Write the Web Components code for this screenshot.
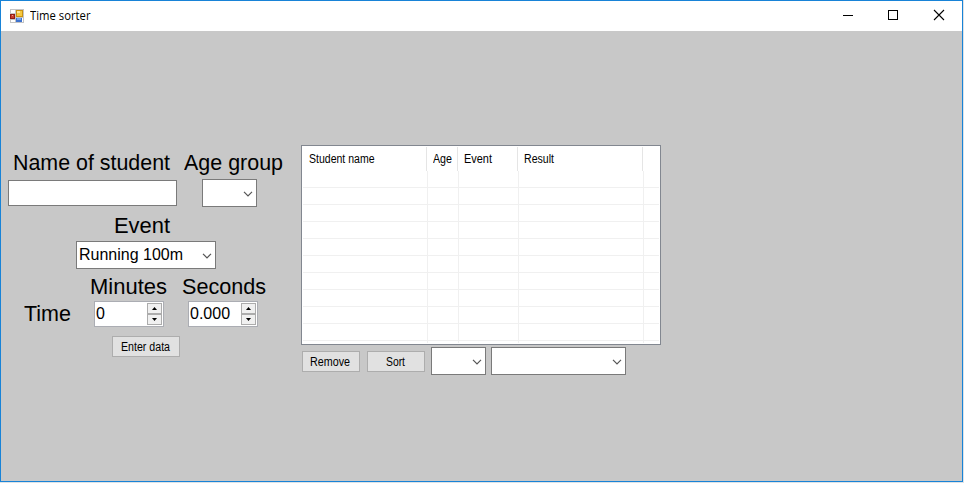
<!DOCTYPE html>
<html lang="en"><head><meta charset="utf-8"><title>Time sorter</title>
<style>
html,body{margin:0;height:100%;overflow:hidden;background:#dfe3e6}
body{font-family:"Liberation Sans",Arial,sans-serif;color:#000}
.content{display:flex;align-items:flex-start}
.form{width:300px;padding-top:119px}
.row{display:flex;align-items:center}
.labels{height:26px;box-sizing:content-box}
.right{padding-top:114px}
.actions push-button{margin-top:1px}
</style></head><body>
<app-window heading="Time sorter">
 <div class="content">
  <div class="form">
   <div class="row labels" style="padding-left:12px;gap:14px"><fit-text size="22" fit="157">Name of student</fit-text><fit-text size="22" fit="99">Age group</fit-text></div>
   <div class="row" style="padding:3px 0 0 7px;gap:25px"><text-field></text-field><combo-box style="width:55px"></combo-box></div>
   <div class="row labels" style="padding:6px 0 0 113px"><fit-text size="22" fit="56">Event</fit-text></div>
   <div class="row" style="padding:2px 0 0 75px"><combo-box style="width:140px"><fit-text size="16" fit="104">Running 100m</fit-text></combo-box></div>
   <div class="row labels" style="padding:5px 0 0 89px;gap:15px"><fit-text size="22" fit="77">Minutes</fit-text><fit-text size="22" fit="84">Seconds</fit-text></div>
   <div class="row" style="height:26px;padding:1px 0 0 23px"><fit-text size="22" fit="47">Time</fit-text><number-spinner style="margin-left:23px">0</number-spinner><number-spinner style="margin-left:24px">0.000</number-spinner></div>
   <div class="row" style="padding:9px 0 0 111px"><push-button style="width:68px"><fit-text size="12" fit="49" style="margin-right:2px">Enter data</fit-text></push-button></div>
  </div>
  <div class="right">
   <list-view></list-view>
   <div class="row actions" style="padding:2px 0 0 1px"><push-button style="width:58px"><fit-text size="12" fit="40" style="margin-right:3px">Remove</fit-text></push-button><push-button style="width:58px;margin-left:7px"><fit-text size="12" fit="19" style="margin-right:1px">Sort</fit-text></push-button><combo-box style="width:55px;margin-left:6px"></combo-box><combo-box style="width:135px;margin-left:5px"></combo-box></div>
  </div>
 </div>
</app-window>
<script>
function define(name, html, setup){
  customElements.define(name, class extends HTMLElement{
    connectedCallback(){
      if(this.shadowRoot) return;
      const root=this.attachShadow({mode:'open'});
      const t=document.createElement('template');
      t.innerHTML='<style>*{box-sizing:border-box}</style>'+html;
      root.append(t.content.cloneNode(true));
      if(setup) setup(this,root);
    }
  });
}
// Text condensed horizontally so its advance equals the "fit" width.
define('fit-text','<style>:host{display:block;white-space:nowrap;line-height:1.2;flex:none}span{display:inline-block;transform-origin:0 0}</style><span><slot></slot></span>',(el,root)=>{
  const s=root.querySelector('span');
  el.style.fontSize=el.getAttribute('size')+'px';
  const fit=+el.getAttribute('fit');
  el.style.width=fit+'px';
  s.style.transform='scaleX('+(fit/s.getBoundingClientRect().width)+')';
});
define('app-window',`<style>
:host{box-sizing:border-box;display:flex;flex-direction:column;width:963px;height:482px;border:1px solid #1883d7;background:#c8c8c8}
header{height:30px;background:#fff;display:flex;align-items:center;padding-left:9px;flex:none}
.icon{width:14px;height:14px;flex:none;margin-top:-1px}
fit-text{margin-left:6px;font-family:"Open Sans","Noto Sans",sans-serif}
nav{margin-left:auto;display:flex}
nav svg{width:46px;height:30px;display:block}
nav svg:last-child{width:45px}
</style><header><svg class="icon" viewBox="0 0 14 14" shape-rendering="crispEdges">
<path d="M0 0h14v14H0z" fill="#c4c4c4"/><path d="M1 1h4v3H1zM1 11h4v2H1zM12 9h1v4h-1z" fill="#fff"/>
<path d="M6 1h7v7H6z" fill="#c99211"/><path d="M7 2h5v5H7z" fill="#f6c83f"/><path d="M7 2h3v2H7z" fill="#ffe493"/>
<path d="M0 5h5v5H0z" fill="#921d15"/><path d="M1 6h3v3H1z" fill="#c93c2c"/><path d="M2 6h1v1H2z" fill="#f0a18d"/>
<path d="M6 9h6v4H6z" fill="#3d72ce"/><path d="M7 9h4v2H7z" fill="#76a5ed"/></svg>
<nav><svg viewBox="0 0 46 30"><path d="M18 14.5h10" stroke="#000"/></svg><svg viewBox="0 0 46 30"><path d="M17.5 9.5h9v9h-9z" fill="none" stroke="#000" shape-rendering="crispEdges"/></svg><svg viewBox="0 0 45 30"><path d="M17 9l10 10M27 9L17 19" stroke="#000" stroke-width="1.1"/></svg></nav></header><slot></slot>`,
(el,root)=>{const n=document.createElement('fit-text');n.setAttribute('size','12');n.setAttribute('fit','60.5');n.textContent=el.getAttribute('heading');root.querySelector('.icon').after(n)});
define('text-field','<style>:host{box-sizing:border-box;display:block;width:169px;height:26px;background:#fff;border:1px solid #7a7a7a}</style>');
define('combo-box',`<style>:host{box-sizing:border-box;display:flex;align-items:center;height:28px;background:#fff;border:1px solid #7a7a7a;padding-left:2px;flex:none}
svg{width:10px;height:6px;margin:1px 3px 0 auto}</style><slot></slot><svg viewBox="0 0 10 6"><path d="M1 .8l4 4 4-4" fill="none" stroke="#555" stroke-width="1.2"/></svg>`);
define('number-spinner',`<style>:host{box-sizing:border-box;display:flex;align-items:center;width:70px;height:26px;background:#fff;border:1px solid #abadb3;padding:0 1px 0 1px;font-size:16px;flex:none}
span{line-height:22px;margin-top:-1px}
div{margin-left:auto;width:15px;height:22px;display:flex;flex-direction:column}
i{flex:1;border:1px solid #acacac;background:#f0f0f0;display:flex;align-items:center;justify-content:center}
svg{width:5px;height:3px}</style><span><slot></slot></span><div><i><svg viewBox="0 0 5 3"><path d="M0 3L2.5 0 5 3z"/></svg></i><i><svg viewBox="0 0 5 3"><path d="M0 0L2.5 3 5 0z"/></svg></i></div>`);
define('push-button','<style>:host{box-sizing:border-box;display:flex;align-items:center;justify-content:center;height:21px;background:#e1e1e1;border:1px solid #adadad;padding-top:1px;flex:none}</style><slot></slot>');
define('list-view',`<style>:host{box-sizing:border-box;display:block;width:360px;height:200px;background:#fff;border:1px solid #828790}
.head,.line,.tail{display:grid;grid-template-columns:125px 31px 60px 125px 1fr}
.head{height:25px;padding-top:1px}
.head>div{border-right:1px solid #e5e5e5;padding:5px 0 0 7px;height:24px}
.head>div:nth-child(n+2){padding-left:6px}.head>div:last-child{border:0}
.body{margin:0 1px}.line{height:17px}.line i{border-right:1px solid #f0f0f0;border-bottom:1px solid #f0f0f0}.line i:last-child{border-right:0}
.tail{height:2px}.tail i{border-right:1px solid #f0f0f0}.tail i:last-child{border:0}
</style><div class="head"><div><fit-text size="12" fit="65.5">Student name</fit-text></div><div><fit-text size="12" fit="19">Age</fit-text></div><div><fit-text size="12" fit="28">Event</fit-text></div><div><fit-text size="12" fit="30">Result</fit-text></div><div></div></div><div class="body"></div>`,
(el,root)=>{const cells='<i></i>'.repeat(5);root.querySelector('.body').innerHTML=('<div class="line">'+cells+'</div>').repeat(10)+'<div class="tail">'+cells+'</div>'});
</script></body></html>
